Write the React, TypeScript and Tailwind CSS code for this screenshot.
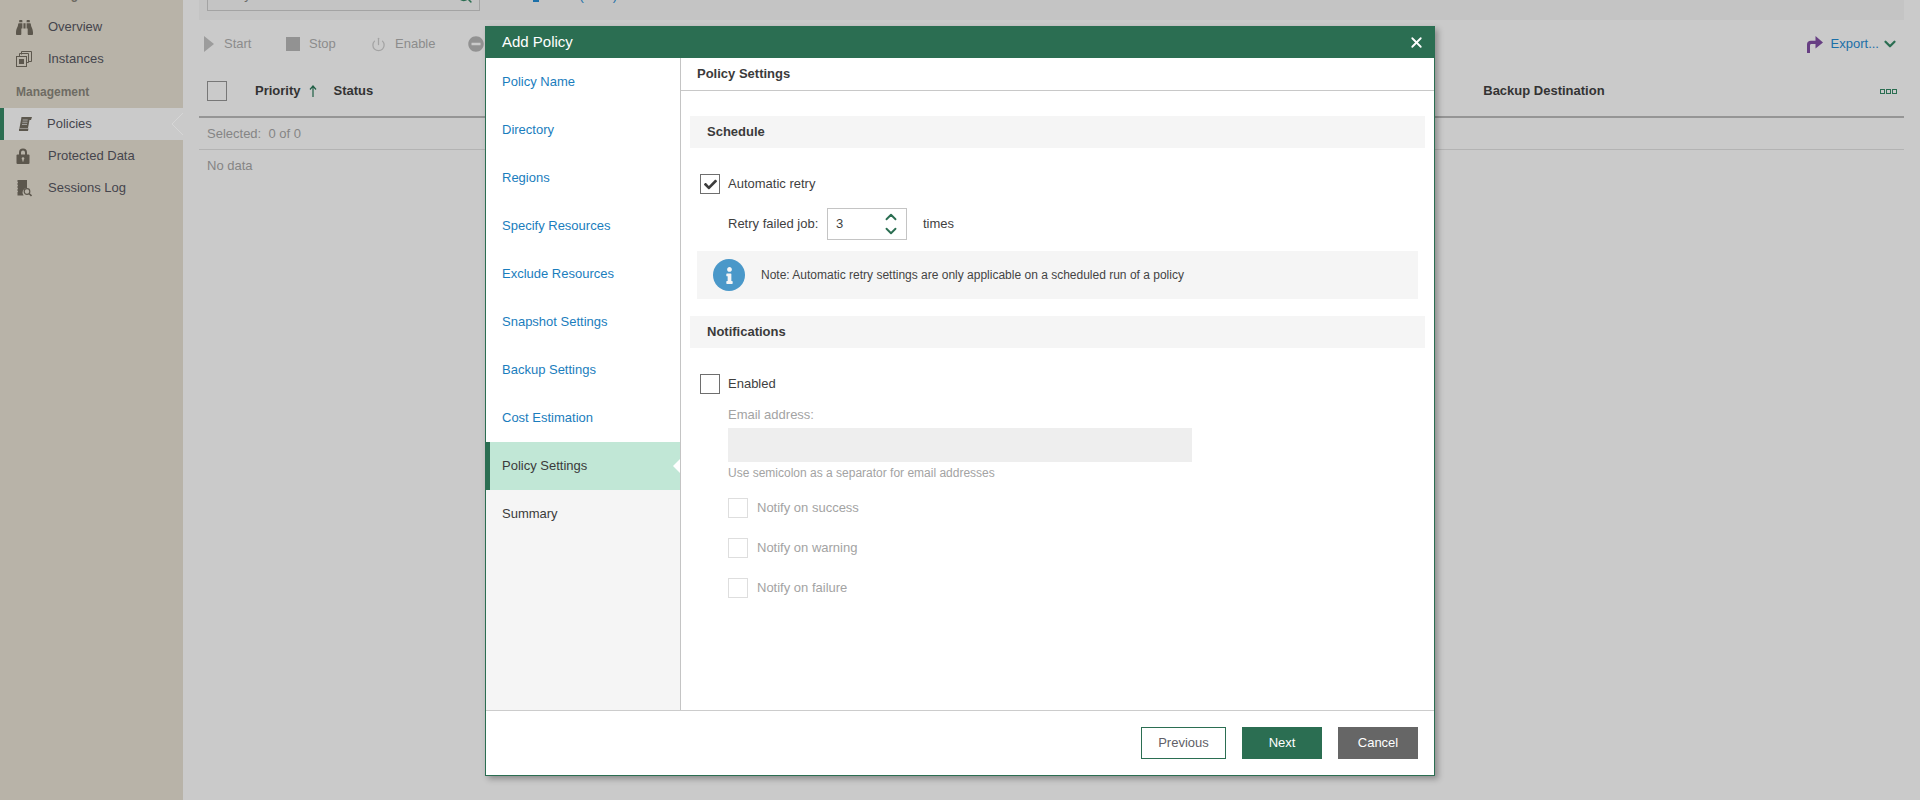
import { ChevronDown, ChevronUp, Power, Search, X } from 'lucide-react'
import { FaBinoculars, FaCheck, FaInfo, FaMinusCircle } from 'react-icons/fa'
import type { ReactNode } from 'react'

const wizardSteps = [
  'Policy Name',
  'Directory',
  'Regions',
  'Specify Resources',
  'Exclude Resources',
  'Snapshot Settings',
  'Backup Settings',
  'Cost Estimation',
]

function InstancesIcon() {
  return (
    <svg width="16" height="16" viewBox="0 0 16 16" fill="none" stroke="#5c574d" strokeWidth="1">
      <path d="M5.5 3.5V.5h10v10h-3" />
      <path d="M3.5 5.5v-3h9v9h-2" />
      <rect x="0.5" y="5.5" width="10" height="10" />
      <rect x="3" y="8" width="5" height="5" fill="#5c574d" stroke="none" />
    </svg>
  )
}

function ScrollIcon() {
  return (
    <svg width="13" height="14" viewBox="0 0 13 14" fill="#5c574d">
      <path d="M2.5 0H13l-1 3h-1.5L9 11H0.5L2.5 0z" />
      <path d="M0 11.5h9.5L9 14H0z" />
      <path d="M3.7 3h5M3.4 5.2h5M3 7.4h5" stroke="#bdbdbd" strokeWidth="0.8" />
    </svg>
  )
}

function LockIcon() {
  return (
    <svg width="14" height="16" viewBox="0 0 14 16" fill="#5c574d">
      <path d="M3 7V4.5a4 4 0 0 1 8 0V7H9V4.5a2 2 0 0 0-4 0V7z" />
      <rect x="0.5" y="6.5" width="13" height="9.5" rx="1" />
      <circle cx="7" cy="10.5" r="1.3" fill="#b8b3a8" />
      <rect x="6.4" y="10.5" width="1.2" height="3" fill="#b8b3a8" />
    </svg>
  )
}

function SessionsIcon() {
  return (
    <svg width="16" height="17" viewBox="0 0 16 17">
      <path d="M1.5 0H11v8a4.5 4.5 0 0 0-3.4 7.5H1.5z" fill="#5c574d" />
      <path d="M0 2.5h2M0 5.5h2M0 8.5h2M0 11.5h2" stroke="#b8b3a8" strokeWidth="0.8" />
      <circle cx="11" cy="11.5" r="2.8" fill="none" stroke="#5c574d" strokeWidth="1.2" />
      <path d="M13 13.5l2.5 2.5" stroke="#5c574d" strokeWidth="1.6" />
    </svg>
  )
}

function ExportIcon() {
  return (
    <svg width="16" height="17" viewBox="0 0 16 17" fill="#673f83">
      <path d="M0 17V8.5C0 6 1.6 4.8 3.8 4.8H8.5V0L16 6.5 8.5 12.5V8H4.5C3.6 8 3 8.5 3 9.5V17z" />
    </svg>
  )
}

function SidebarRow({ icon, label, active }: { icon: ReactNode; label: string; active?: boolean }) {
  if (active) {
    return (
      <div className="relative flex h-8 items-center border-l-4 border-[#2b6e52] bg-[#cacaca] text-[#45454d]">
        <div className="flex w-[43px] justify-center">{icon}</div>
        <span>{label}</span>
        <svg className="absolute right-0 top-[5px]" width="12" height="22" viewBox="0 0 12 22" fill="#cacaca" stroke="#d6d6d6">
          <path d="M12 0L1 11l11 11" />
        </svg>
      </div>
    )
  }
  return (
    <div className="flex h-8 items-center pl-4 text-[#45454d]">
      <div className="flex w-8 items-center">{icon}</div>
      <span>{label}</span>
    </div>
  )
}

function Checkbox({ muted, checked }: { muted?: boolean; checked?: boolean }) {
  return (
    <div className={`flex h-5 w-5 items-center justify-center border bg-white ${muted ? 'border-[#dedede]' : 'border-[#6e6e6e]'}`}>
      {checked && <FaCheck className="text-[#3c3c3c]" size={13} />}
    </div>
  )
}

function SectionBar({ title, className }: { title: string; className: string }) {
  return (
    <div className={`flex h-8 items-center bg-[#f5f5f5] pl-[17px] font-bold text-[#3b3b3b] ${className}`}>
      {title}
    </div>
  )
}

function PolicyPage() {
  return (
    <>
      <aside className="w-[183px] shrink-0 bg-[#b8b3a8]">
        <div className="-mt-[22px] flex h-[33px] items-center pl-4 text-[12px] font-bold text-[#6e6b63]">Monitoring</div>
        <SidebarRow icon={<FaBinoculars size={17} color="#5c574d" />} label="Overview" />
        <SidebarRow icon={<InstancesIcon />} label="Instances" />
        <div className="flex h-[33px] items-center pl-4 text-[12px] font-bold text-[#6e6b63]">Management</div>
        <SidebarRow active icon={<ScrollIcon />} label="Policies" />
        <SidebarRow icon={<LockIcon />} label="Protected Data" />
        <SidebarRow icon={<SessionsIcon />} label="Sessions Log" />
      </aside>

      <main className="min-w-0 flex-1 bg-[#cacaca] pl-4 pr-4">
        <div className="relative h-5 overflow-hidden bg-[#c4c4c4] pl-2">
          <div className="relative -mt-[21px] flex h-8 w-[273px] items-center border border-[#a3a3a3] pl-2 text-[#6b6b6b]">
            Policy
            <Search className="absolute right-[6px] top-[7px] text-[#2b6e52]" size={17} />
          </div>
          <div className="absolute left-[334px] -top-[14px] flex items-center gap-2 text-[#1b6fa8]">
            <span className="h-3 w-[6px] bg-[#1b6fa8]" />
            <span>Filter (none)</span>
          </div>
        </div>

        <div className="flex h-12 items-center pl-[5px] text-[#8c8c8c]">
          <div className="flex w-[82px] items-center gap-[10px]">
            <span className="h-0 w-0 border-y-8 border-l-10 border-y-transparent border-l-[#9c9c9c]" />
            Start
          </div>
          <div className="flex w-[85px] items-center gap-[9px]">
            <span className="h-[14px] w-[14px] bg-[#929292]" />
            Stop
          </div>
          <div className="flex w-[97px] items-center gap-[9px]">
            <Power className="text-[#a3a3a3]" size={15} />
            Enable
          </div>
          <FaMinusCircle size={16} color="#929292" />
          <div className="ml-auto flex items-center pr-[5px] text-[#1b6fa8]">
            <ExportIcon />
            <span className="ml-2">Export...</span>
            <ChevronDown className="ml-[2px] text-[#2b6e52]" size={18} strokeWidth={3} />
          </div>
        </div>

        <div className="flex h-[50px] items-center border-b-2 border-[#959595] pb-[2px] pl-2 font-bold text-[#333]">
          <div className="h-5 w-5 border border-[#777]" />
          <span className="ml-7">Priority</span>
          <svg className="ml-2" width="8" height="12" viewBox="0 0 8 12" fill="none" stroke="#1f5f45" strokeWidth="1.2">
            <path d="M4 12V1M1 4.5L4 1l3 3.5" />
          </svg>
          <span className="ml-[17px]">Status</span>
          <span className="ml-[1110px]">Backup Destination</span>
          <svg className="ml-auto mr-[7px]" width="17" height="5" viewBox="0 0 17 5" fill="none" stroke="#2b6e52">
            <rect x="0.5" y="0.5" width="4" height="4" />
            <rect x="6.5" y="0.5" width="4" height="4" />
            <rect x="12.5" y="0.5" width="4" height="4" />
          </svg>
        </div>
        <div className="flex h-8 items-center whitespace-pre border-b border-[#b3b3b3] pl-2 text-[#858585]">
          Selected:  0 of 0
        </div>
        <div className="flex h-8 items-center pl-2 text-[#858585]">No data</div>
      </main>
    </>
  )
}

function AddPolicyDialog() {
  return (
    <div className="absolute left-[485px] top-[26px] flex h-[750px] w-[950px] flex-col border border-[#2b6e52] bg-white shadow-[3px_3px_6px_rgba(0,0,0,0.3)]">
      <div className="flex h-[31px] shrink-0 items-center justify-between bg-[#2b6e52] pl-4 pr-[9px] text-[15px] text-white">
        Add Policy
        <X size={17} strokeWidth={2.5} />
      </div>

      <div className="flex h-[652px] shrink-0">
        <nav className="flex w-[195px] shrink-0 flex-col border-r border-[#c4c4c4] bg-[#f5f5f5]">
          {wizardSteps.map((step) => (
            <div key={step} className="flex h-12 shrink-0 items-center bg-white pl-4 text-[#1a7dbd]">
              {step}
            </div>
          ))}
          <div className="relative flex h-12 shrink-0 items-center border-l-4 border-[#2b6e52] bg-[#c1e7d6] pl-3 text-[#3b3b3b]">
            Policy Settings
            <span className="absolute right-0 top-[17px] h-0 w-0 border-y-7 border-r-7 border-y-transparent border-r-white" />
          </div>
          <div className="flex h-12 shrink-0 items-center pl-4 text-[#3b3b3b]">Summary</div>
        </nav>

        <div className="min-w-0 flex-1">
          <div className="flex h-[33px] items-center border-b border-[#c8c8c8] pl-4 font-bold text-[#3b3b3b]">
            Policy Settings
          </div>
          <div className="px-[9px] pt-[25px] text-[#3f3f3f]">
            <SectionBar title="Schedule" className="" />

            <div className="mt-[26px] flex h-5 items-center gap-2 pl-[10px]">
              <Checkbox checked />
              Automatic retry
            </div>
            <div className="mt-[14px] flex h-8 items-center pl-[38px]">
              <span className="w-[99px]">Retry failed job:</span>
              <div className="flex h-8 w-20 items-center justify-between border border-[#c4c4c4] pl-2 pr-[6px]">
                3
                <div className="flex flex-col text-[#2b6e52]">
                  <ChevronUp size={18} strokeWidth={2.5} />
                  <ChevronDown className="-mt-1" size={18} strokeWidth={2.5} />
                </div>
              </div>
              <span className="ml-4">times</span>
            </div>

            <div className="mx-[7px] mt-[11px] flex h-12 items-center bg-[#f5f5f5] pl-4 text-[12px] text-[#444]">
              <div className="flex h-8 w-8 items-center justify-center rounded-full bg-[#4a98c9]">
                <FaInfo className="text-[#f5f5f5]" size={17} />
              </div>
              <span className="ml-4">Note: Automatic retry settings are only applicable on a scheduled run of a policy</span>
            </div>

            <SectionBar title="Notifications" className="mt-[17px]" />

            <div className="mt-[26px] flex h-5 items-center gap-2 pl-[10px]">
              <Checkbox />
              Enabled
            </div>

            <div className="pl-[38px] text-[#a3a3a3]">
              <div className="mt-3 flex h-[18px] items-center">Email address:</div>
              <div className="mt-1 h-[34px] w-[464px] bg-[#eeeeee]" />
              <div className="flex h-[22px] items-center text-[12px]">Use semicolon as a separator for email addresses</div>
              <div className="mt-[14px] flex flex-col gap-5">
                {['Notify on success', 'Notify on warning', 'Notify on failure'].map((label) => (
                  <div key={label} className="flex h-5 items-center gap-[9px]">
                    <Checkbox muted />
                    {label}
                  </div>
                ))}
              </div>
            </div>
          </div>
        </div>
      </div>

      <div className="flex h-[65px] shrink-0 justify-end gap-4 border-t border-[#cccccc] pr-4 pt-4">
        <button className="h-8 w-[85px] border border-[#2b6e52] text-[#5f5f68]">Previous</button>
        <button className="h-8 w-20 bg-[#2b6e52] text-white">Next</button>
        <button className="h-8 w-20 bg-[#666666] text-white">Cancel</button>
      </div>
    </div>
  )
}

export default function App() {
  return (
    <div className="relative flex h-[800px] w-[1920px] overflow-hidden bg-[#cacaca] font-['Liberation_Sans',Arial,sans-serif] text-[13px]">
      <PolicyPage />
      <AddPolicyDialog />
    </div>
  )
}
